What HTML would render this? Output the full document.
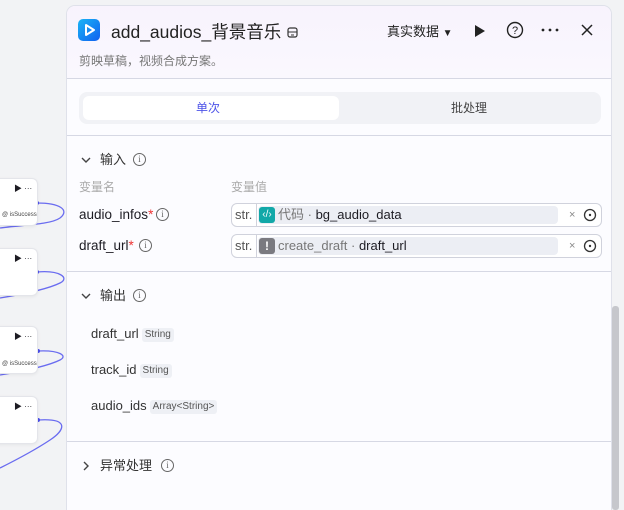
<!DOCTYPE html>
<html><head><meta charset="utf-8"><style>
*{margin:0;padding:0;box-sizing:border-box}
html,body{width:624px;height:510px;overflow:hidden}
body{background:#f2f3f5;font-family:"Liberation Sans","Noto Sans CJK SC",sans-serif;position:relative;color:#1d1c23}
.abs{position:absolute}
.node{position:absolute;left:-10px;width:48px;background:#fff;border:1px solid #e4e5ea;border-radius:6px;box-shadow:0 1px 3px rgba(0,0,0,.06)}
.panel{position:absolute;left:66px;top:5px;width:546px;height:505px;background:#fcfcff;border:1px solid #dfe1ea;border-bottom:none;border-radius:9px 9px 0 0;overflow:hidden}
.hdr{height:73px;background:linear-gradient(#f8f3fd,#faf8fe);border-bottom:1px solid #d6d8e4}
.t{position:absolute;white-space:nowrap;line-height:18px}
.sep{position:absolute;left:0;right:0;height:1px;background:#d6d8e4}
.box{position:absolute;left:164px;width:371px;height:24px;border:1px solid #d0d2dc;border-radius:6px;background:#fff}
.chip{position:absolute;left:26px;top:2px;width:300px;height:18px;background:#eceef4;border-radius:4px}
.tag{display:inline-block;background:#eef0f5;border-radius:3px;font-size:10px;line-height:14px;color:#555;padding:0 3px;margin-left:3px;vertical-align:1px}
.info{position:absolute;width:13px;height:13px;border:1px solid #666;border-radius:50%;font-size:9px;text-align:center;line-height:11px;color:#666;font-family:"Liberation Serif",serif}
</style></head><body>
<svg class="abs" style="left:0;top:0" width="70" height="510"><g fill="none" stroke="#6a6cf0" stroke-width="1.3">
<path d="M37 203 C60 203,70 210,60 218 C50 225,20 225,0 228"/>
<path d="M37 272 C60 270,70 278,60 283 C50 288,30 293,0 298"/>
<path d="M38 351 C60 350,68 356,60 360 C50 365,30 370,0 375"/>
<path d="M38 420 C70 418,65 430,50 440 C35 450,20 458,0 468"/></g>
<g fill="#4a4de8"><circle cx="37" cy="203" r="2"/><circle cx="37" cy="272" r="2"/><circle cx="38" cy="351" r="2"/><circle cx="38" cy="420" r="2"/></g></svg>
<div class="node" style="top:178px;height:48px"></div>
<div class="node" style="top:248px;height:48px"></div>
<div class="node" style="top:326px;height:48px"></div>
<div class="node" style="top:396px;height:48px"></div>
<div class="t" style="left:14px;top:180px;font-size:8px">▶ ···</div>
<div class="t" style="left:14px;top:250px;font-size:8px">▶ ···</div>
<div class="t" style="left:14px;top:328px;font-size:8px">▶ ···</div>
<div class="t" style="left:14px;top:398px;font-size:8px">▶ ···</div>
<div class="t" style="left:2px;top:206px;font-size:6px;color:#444">@ isSuccess</div>
<div class="t" style="left:2px;top:355px;font-size:6px;color:#444">@ isSuccess</div>
<div class="abs" style="left:612px;top:306px;width:7px;height:204px;background:#c6c7cc;border-radius:3px"></div>
<div class="panel">
<div class="hdr"></div>
<div class="abs" style="left:11px;top:13px;width:22px;height:22px;border-radius:5px;background:linear-gradient(135deg,#1ab4f5,#1060f0)"><svg width="22" height="22"><path d="M8 6 L16 11 L8 16 Z" fill="none" stroke="#fff" stroke-width="2" stroke-linejoin="round"/></svg></div>
<div class="t" style="left:44px;top:14px;font-size:17.5px;line-height:24px;color:#222">add_audios_背景音乐</div>
<svg class="abs" style="left:220px;top:21px" width="11" height="11"><rect x="1" y="1" width="9" height="9" rx="2" fill="none" stroke="#333" stroke-width="1.2"/><path d="M1 5H10M4 8H7" stroke="#333" stroke-width="1.1"/></svg>
<div class="t" style="left:320px;top:17px;font-size:13px;color:#222">真实数据 <span style="font-size:10px">▼</span></div>
<svg class="abs" style="left:406px;top:18px" width="14" height="14"><path d="M2 1 L12 7 L2 13Z" fill="#222"/></svg>
<svg class="abs" style="left:439px;top:15px" width="18" height="18"><circle cx="9" cy="9" r="7.5" fill="none" stroke="#222" stroke-width="1.4"/><text x="9" y="13" font-size="11" text-anchor="middle" fill="#222" font-family="Liberation Sans">?</text></svg>
<svg class="abs" style="left:474px;top:22px" width="18" height="4"><circle cx="2" cy="2" r="1.4" fill="#222"/><circle cx="9" cy="2" r="1.4" fill="#222"/><circle cx="16" cy="2" r="1.4" fill="#222"/></svg>
<svg class="abs" style="left:513px;top:17px" width="14" height="14"><path d="M2 2L12 12M12 2L2 12" stroke="#222" stroke-width="1.5"/></svg>
<div class="t" style="left:12px;top:46px;font-size:12px;color:#777">剪映草稿，视频合成方案。</div>
<div class="abs" style="left:12px;top:86px;width:522px;height:32px;background:#f1f2f6;border-radius:8px"></div>
<div class="abs" style="left:16px;top:90px;width:256px;height:24px;background:#fff;border-radius:6px"></div>
<div class="t" style="left:129px;top:93px;font-size:12px;color:#4d53e8">单次</div>
<div class="t" style="left:384px;top:93px;font-size:12px;color:#444">批处理</div>
<div class="sep" style="top:129px"></div>
<svg class="abs" style="left:14px;top:150px" width="10" height="8"><path d="M1 2L5 6L9 2" fill="none" stroke="#444" stroke-width="1.4"/></svg>
<div class="t" style="left:33px;top:145px;font-size:13px;color:#333">输入</div><div class="info" style="left:66px;top:147px">i</div>
<div class="t" style="left:12px;top:172px;font-size:12px;color:#aaa">变量名</div>
<div class="t" style="left:164px;top:172px;font-size:12px;color:#aaa">变量值</div>
<div class="t" style="left:12px;top:200px;font-size:13.5px">audio_infos<span style="color:#e33">*</span></div><div class="info" style="left:89px;top:202px">i</div>
<div class="t" style="left:12px;top:231px;font-size:13.5px">draft_url<span style="color:#e33">*</span></div><div class="info" style="left:72px;top:233px">i</div>
<div class="box" style="top:197px"><span class="t" style="left:3px;top:2px;font-size:13px;color:#555">str.</span><div class="abs" style="left:24px;top:0;width:1px;height:22px;background:#d0d2dc"></div>
<div class="chip"><div class="abs" style="left:1px;top:1px;width:16px;height:16px;background:#12a8a8;border-radius:3px;color:#fff;font-size:10px;text-align:center;line-height:16px">‹/›</div><span class="t" style="left:20px;top:0px;font-size:13px"><span style="color:#777">代码 · </span>bg_audio_data</span><span class="t" style="left:311px;top:0px;font-size:11px;color:#888">×</span></div>
<svg class="abs" style="left:351px;top:4px" width="14" height="14"><circle cx="7" cy="7" r="5.5" fill="none" stroke="#333" stroke-width="1.3"/><circle cx="7" cy="7" r="1.2" fill="#333"/></svg></div>
<div class="box" style="top:228px"><span class="t" style="left:3px;top:2px;font-size:13px;color:#555">str.</span><div class="abs" style="left:24px;top:0;width:1px;height:22px;background:#d0d2dc"></div>
<div class="chip"><div class="abs" style="left:1px;top:1px;width:16px;height:16px;background:#7a7a80;border-radius:3px;color:#fff;font-size:12px;font-weight:bold;text-align:center;line-height:16px">!</div><span class="t" style="left:20px;top:0px;font-size:13px"><span style="color:#777">create_draft · </span>draft_url</span><span class="t" style="left:311px;top:0px;font-size:11px;color:#888">×</span></div>
<svg class="abs" style="left:351px;top:4px" width="14" height="14"><circle cx="7" cy="7" r="5.5" fill="none" stroke="#333" stroke-width="1.3"/><circle cx="7" cy="7" r="1.2" fill="#333"/></svg></div>
<div class="sep" style="top:265px"></div>
<svg class="abs" style="left:14px;top:286px" width="10" height="8"><path d="M1 2L5 6L9 2" fill="none" stroke="#444" stroke-width="1.4"/></svg>
<div class="t" style="left:33px;top:281px;font-size:13px;color:#333">输出</div><div class="info" style="left:66px;top:283px">i</div>
<div class="t" style="left:24px;top:319px;font-size:13px;color:#333">draft_url<span class="tag">String</span></div>
<div class="t" style="left:24px;top:355px;font-size:13px;color:#333">track_id<span class="tag">String</span></div>
<div class="t" style="left:24px;top:391px;font-size:13px;color:#333">audio_ids<span class="tag">Array&lt;String&gt;</span></div>
<div class="sep" style="top:435px"></div>
<svg class="abs" style="left:15px;top:455px" width="8" height="10"><path d="M2 1L6 5L2 9" fill="none" stroke="#444" stroke-width="1.4"/></svg>
<div class="t" style="left:33px;top:451px;font-size:13px;color:#333">异常处理</div><div class="info" style="left:94px;top:453px">i</div>
</div>
</body></html>
